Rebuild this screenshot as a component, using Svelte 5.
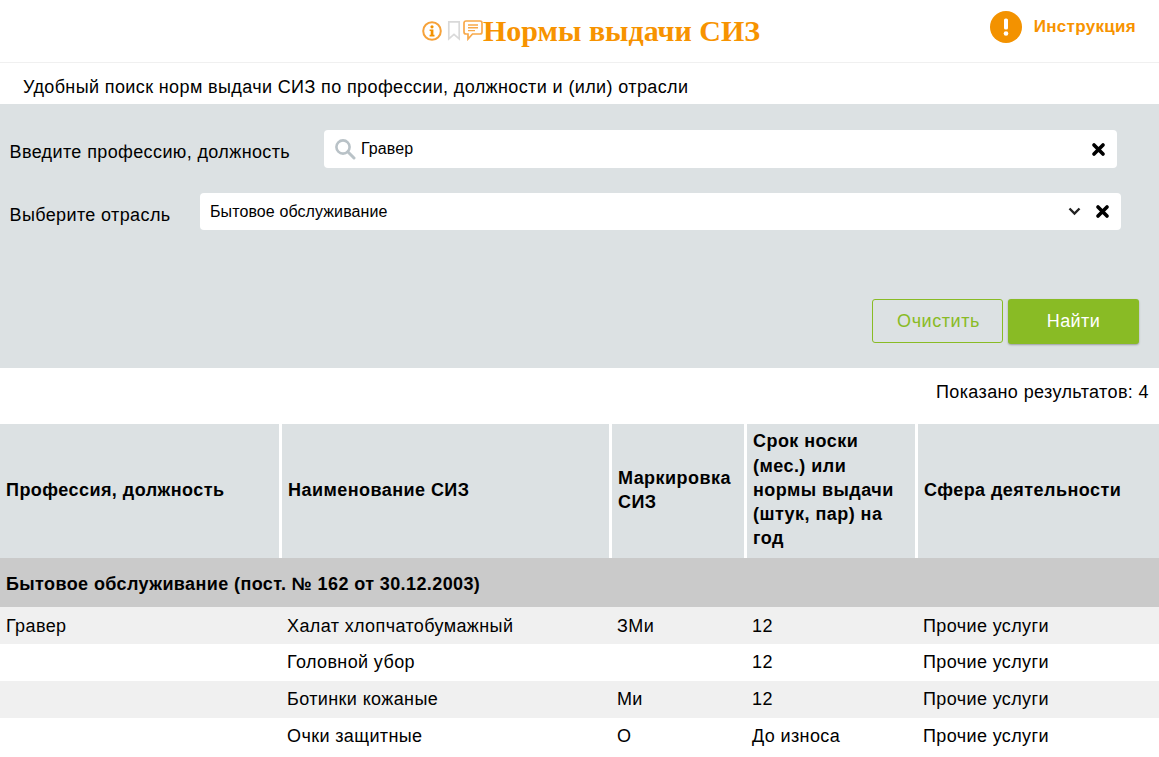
<script lang="ts">
  const rows = [
    { job: "Гравер", item: "Халат хлопчатобумажный", mark: "ЗМи", term: "12", area: "Прочие услуги" },
    { job: "", item: "Головной убор", mark: "", term: "12", area: "Прочие услуги" },
    { job: "", item: "Ботинки кожаные", mark: "Ми", term: "12", area: "Прочие услуги" },
    { job: "", item: "Очки защитные", mark: "О", term: "До износа", area: "Прочие услуги" },
  ];
</script>

<div class="page">
  <header class="top">
    <div class="title-wrap">
      <svg class="ico info" width="20" height="20" viewBox="0 0 20 20" fill="none">
        <circle cx="10" cy="10" r="8.8" stroke="#f6a23a" stroke-width="2" />
        <circle cx="10" cy="5.8" r="1.6" fill="#f39200" />
        <path d="M7.6 8.4h3.8v5.4h1.1v1.7H7.6v-1.7h1.1v-3.7H7.6z" fill="#f39200" />
      </svg>
      <svg class="ico mark" width="14" height="21" viewBox="0 0 14 21" fill="none">
        <path d="M1.8 1.8h10.4v17l-5.2-4.4-5.2 4.4z" stroke="#d9d9d9" stroke-width="1.7" />
      </svg>
      <svg class="ico chat" width="20" height="21" viewBox="0 0 20 21" fill="none">
        <path d="M3 1h14a2 2 0 0 1 2 2v9a2 2 0 0 1-2 2H9.5L5 19v-5H3a2 2 0 0 1-2-2V3a2 2 0 0 1 2-2z" stroke="#f8a94a" stroke-width="1.7" />
        <path d="M5 5h10M5 7.8h10M5 10.6h7" stroke="#f8a94a" stroke-width="1.4" />
      </svg>
      <h1>Нормы выдачи СИЗ</h1>
    </div>
    <div class="guide">
      <svg width="32" height="32" viewBox="0 0 32 32">
        <circle cx="16" cy="16" r="16" fill="#f39200" />
        <rect x="14" y="7.5" width="4" height="11" rx="1.6" fill="#fff" />
        <circle cx="16" cy="22.5" r="2.3" fill="#fff" />
      </svg>
      <span class="guide-label">Инструкция</span>
    </div>
  </header>

  <p class="lead">Удобный поиск норм выдачи СИЗ по профессии, должности и (или) отрасли</p>

  <section class="filters">
    <div class="field first">
      <span class="label">Введите профессию, должность</span>
      <div class="box search">
        <svg width="22" height="22" viewBox="0 0 22 22" fill="none">
          <circle cx="9" cy="9" r="6.6" stroke="#b9c2c7" stroke-width="2.6" />
          <path d="M13.8 13.8 20 20" stroke="#b9c2c7" stroke-width="3" stroke-linecap="round" />
        </svg>
        <span class="value">Гравер</span>
        <svg class="x" width="15" height="15" viewBox="0 0 15 15"><path d="M3 3l9 9M12 3l-9 9" stroke="#000" stroke-width="3.7" stroke-linecap="round" /></svg>
      </div>
    </div>
    <div class="field second">
      <span class="label">Выберите отрасль</span>
      <div class="box select">
        <span class="value">Бытовое обслуживание</span>
        <svg class="chev" width="13" height="9" viewBox="0 0 13 9" fill="none"><path d="M1.5 1.5 6.5 6.5l5-5" stroke="#222" stroke-width="2.4" /></svg>
        <svg class="x" width="15" height="15" viewBox="0 0 15 15"><path d="M3 3l9 9M12 3l-9 9" stroke="#000" stroke-width="3.7" stroke-linecap="round" /></svg>
      </div>
    </div>
    <div class="actions">
      <button type="button" class="clear">Очистить</button>
      <button type="button" class="find">Найти</button>
    </div>
  </section>

  <div class="count">Показано результатов: 4</div>

  <table>
    <colgroup>
      <col style="width:280px" />
      <col style="width:330px" />
      <col style="width:135px" />
      <col style="width:171px" />
      <col />
    </colgroup>
    <thead>
      <tr>
        <th>Профессия, должность</th>
        <th>Наименование СИЗ</th>
        <th>Маркировка СИЗ</th>
        <th>Срок носки (мес.) или нормы выдачи (штук, пар) на год</th>
        <th>Сфера деятельности</th>
      </tr>
    </thead>
    <tbody>
      <tr class="group"><td colspan="5">Бытовое обслуживание (пост. № 162 от 30.12.2003)</td></tr>
      {#each rows as row}
        <tr class="row">
          <td>{row.job}</td>
          <td>{row.item}</td>
          <td>{row.mark}</td>
          <td>{row.term}</td>
          <td>{row.area}</td>
        </tr>
      {/each}
    </tbody>
  </table>
</div>

<style>
  :global(body) {
    margin: 0;
    background: #fff;
  }

  .page {
    font-family: "Liberation Sans", Arial, sans-serif;
    font-size: 18px;
    letter-spacing: 0.38px;
    color: #000;
    overflow: hidden;
  }

  .top {
    height: 62px;
    border-bottom: 1px solid #f0f0f0;
    display: flex;
    justify-content: space-between;
    padding-left: 422px;
    padding-right: 23px;
  }

  .title-wrap {
    display: flex;
    align-items: center;
    height: 62px;
  }

  .ico {
    flex: none;
    margin-top: -1px;
  }

  .mark {
    margin-left: 5px;
  }

  .chat {
    margin-left: 2px;
  }

  h1 {
    margin: 0;
    font-family: "Liberation Serif", "Times New Roman", serif;
    font-size: 30px;
    font-weight: bold;
    letter-spacing: 0;
    color: #f79300;
  }

  .guide {
    display: flex;
    align-items: center;
    height: 54px;
    gap: 12px;
  }

  .guide-label {
    font-size: 17px;
    font-weight: bold;
    letter-spacing: 0.3px;
    color: #f79300;
  }

  .lead {
    margin: 0;
    padding: 13px 0 0 23px;
    height: 28px;
    line-height: 22px;
    box-sizing: content-box;
  }

  .filters {
    background: #dce1e3;
    height: 264px;
    display: flex;
    flex-direction: column;
  }

  .field {
    display: flex;
    align-items: center;
    padding-left: 10px;
  }

  .first {
    margin-top: 26px;
  }

  .second {
    margin-top: 25px;
  }

  .label {
    flex: none;
    margin-left: -0.5px;
  }

  .first .label {
    width: 314.5px;
    padding-top: 7px;
  }

  .second .label {
    width: 190.5px;
    padding-top: 7px;
  }

  .box {
    background: #fff;
    border-radius: 4px;
    display: flex;
    align-items: center;
    box-sizing: border-box;
  }

  .search {
    width: 793px;
    height: 38px;
    padding: 0 11px 0 10px;
    gap: 5px;
  }

  .select {
    width: 921px;
    height: 37px;
    padding: 0 11px 0 10px;
  }

  .value {
    flex: 1;
    font-size: 16px;
    letter-spacing: 0.1px;
  }

  .chev {
    margin-right: 14px;
  }

  .actions {
    margin-top: auto;
    margin-bottom: 24px;
    display: flex;
    justify-content: flex-end;
    align-items: flex-start;
    gap: 5px;
    padding-right: 20px;
  }

  button {
    font-family: inherit;
    font-size: 18px;
    letter-spacing: 0.4px;
    border-radius: 3px;
    height: 45px;
    cursor: pointer;
  }

  .clear {
    width: 131px;
    height: 44px;
    background: transparent;
    border: 1px solid #89bb25;
    color: #89bb25;
    letter-spacing: 0.55px;
    padding-left: 8px;
  }

  .find {
    width: 131px;
    background: #89bb25;
    border: 0;
    color: #fff;
    box-shadow: 0 1px 2px rgba(0, 0, 0, 0.3);
  }

  .count {
    text-align: right;
    padding: 14px 10px 0 0;
    height: 42px;
    line-height: 21px;
  }

  table {
    width: 100%;
    table-layout: fixed;
    border-collapse: collapse;
  }

  th {
    background: #dce1e3;
    border-right: 3px solid #fff;
    font-weight: bold;
    letter-spacing: 0.45px;
    text-align: left;
    line-height: 24.3px;
    padding: 4px 8px 6px 6.5px;
    height: 134px;
    box-sizing: border-box;
  }

  th:first-child {
    padding-left: 6px;
  }

  th:last-child {
    border-right: 0;
  }

  .group td {
    background: #cacaca;
    font-weight: bold;
    letter-spacing: 0.4px;
    height: 49px;
    padding: 4px 6px 0;
    box-sizing: border-box;
  }

  .row td {
    height: 37px;
    padding: 0 6px 1px 7px;
    box-sizing: border-box;
  }

  .row:nth-child(2) td {
    padding-top: 1px;
    padding-bottom: 0;
  }

  .row td:first-child {
    padding-left: 6px;
  }

  .row:nth-child(even) td {
    background: #f0f0f0;
  }
</style>
